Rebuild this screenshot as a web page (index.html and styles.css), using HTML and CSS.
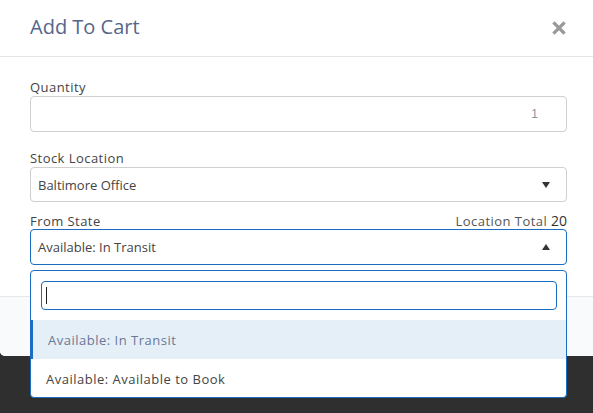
FILE: index.html
```html
<!DOCTYPE html>
<html>
<head>
<meta charset="utf-8">
<link rel="stylesheet" href="styles.css">
</head>
<body>
<div class="modal">
  <div class="modal-header">
    <h2 class="modal-title">Add To Cart</h2>
    <span class="close">
      <svg width="14" height="14" viewBox="0 0 14 14"><path d="M2.5 2.5 L11.5 11.5 M11.5 2.5 L2.5 11.5" stroke="#9a9a9a" stroke-width="3.2" stroke-linecap="square"/></svg>
    </span>
  </div>
  <div class="modal-body">
    <div class="group group-qty">
      <label class="label">Quantity</label>
      <div class="input input-qty"><span class="qty-value">1</span></div>
    </div>
    <div class="group group-loc">
      <label class="label">Stock Location</label>
      <div class="input select">
        <span>Baltimore Office</span>
        <span class="arrow down"></span>
      </div>
    </div>
    <div class="group group-state">
      <div class="label-row">
        <label class="label">From State</label>
        <span class="total">Location Total <b>20</b></span>
      </div>
      <div class="field-wrap">
        <div class="input select active">
          <span>Available: In Transit</span>
          <span class="arrow up"></span>
        </div>
        <div class="dropdown">
          <div class="search-wrap">
            <div class="search"><span class="caret"></span></div>
          </div>
          <ul class="options">
            <li class="option highlighted">Available: In Transit</li>
            <li class="option">Available: Available to Book</li>
          </ul>
        </div>
      </div>
    </div>
  </div>
  <div class="modal-footer"></div>
</div>
</body>
</html>
```

FILE: styles.css
```css
html, body {
  margin: 0;
  padding: 0;
}
body {
  background: #2f2f2f;
  font-family: "Open Sans", "Noto Sans", sans-serif;
  color: #444;
  height: 413px;
  overflow: hidden;
}
.modal {
  background: #fff;
  width: 600px;
  border-radius: 0 0 5px 5px;
}
.modal-header {
  height: 56px;
  border-bottom: 1px solid #e5e5e5;
  display: flex;
  align-items: center;
  justify-content: space-between;
  padding: 0 28px 0 30px;
  box-sizing: content-box;
  width: 535px;
}
.modal-title {
  margin: 0;
  font-size: 20px;
  font-weight: 400;
  color: #56668a;
  line-height: 1;
  position: relative;
  top: -1px;
}
.close {
  display: flex;
  width: 14px;
  height: 14px;
  margin-right: -1px;
}
.modal-body {
  padding: 22px 0 31px 30px;
  width: 537px;
}
.label {
  display: block;
  font-size: 13px;
  line-height: 17px;
  color: #444;
  letter-spacing: 0.45px;
}
.group-qty { margin-bottom: 18px; }
.group-loc { margin-bottom: 10px; }
.input {
  box-sizing: border-box;
  border: 1px solid #cfcfcf;
  border-radius: 4px;
  height: 35px;
  display: flex;
  align-items: center;
  font-size: 13px;
  color: #444;
}
.input-qty {
  height: 36px;
  justify-content: flex-end;
  padding-right: 28px;
}
.qty-value {
  font-family: "Liberation Sans", Arial, sans-serif;
  font-size: 12px;
  color: #8a92ab;
}
.select {
  justify-content: space-between;
  padding: 0 16px 0 7px;
}
.select.active {
  border-color: #1a6dc0;
  height: 36px;
}
.arrow {
  width: 0;
  height: 0;
  border-left: 4px solid transparent;
  border-right: 4px solid transparent;
}
.arrow.down { border-top: 6px solid #333; }
.arrow.up { border-bottom: 6px solid #333; }
.label-row {
  display: flex;
  justify-content: space-between;
  align-items: baseline;
  height: 17px;
  margin-bottom: 0;
}
.total {
  font-size: 13px;
  line-height: 17px;
  color: #555;
  letter-spacing: 0.45px;
}
.total b {
  font-weight: 500;
  font-size: 14px;
  line-height: 17px;
  letter-spacing: 0;
  color: #333;
}
.field-wrap {
  position: relative;
}
.dropdown {
  position: absolute;
  top: 41px;
  left: 0;
  right: 0;
  box-sizing: border-box;
  height: 128px;
  border: 1px solid #1a6dc0;
  border-radius: 4px;
  background: #fff;
  z-index: 5;
}
.search-wrap {
  padding: 10px 9px 10px 10px;
}
.search {
  box-sizing: border-box;
  height: 29px;
  border: 1px solid #1a6dc0;
  border-radius: 4px;
  display: flex;
  align-items: center;
  padding-left: 4px;
}
.caret {
  width: 1px;
  height: 17px;
  background: #222;
}
.options {
  list-style: none;
  margin: 0;
  padding: 0;
}
.option {
  height: 39px;
  display: flex;
  align-items: center;
  padding-left: 15px;
  font-size: 13px;
  color: #444;
  letter-spacing: 0.5px;
}
.option.highlighted {
  background: #e5eff8;
  color: #6a7896;
  border-left: 3px solid #1a6dc0;
  margin-left: -1px;
  padding-left: 15px;
}
.modal-footer {
  border-top: 1px solid #e5e7ea;
  background: #f9fafc;
  height: 59px;
  border-radius: 0 0 5px 5px;
}
```
